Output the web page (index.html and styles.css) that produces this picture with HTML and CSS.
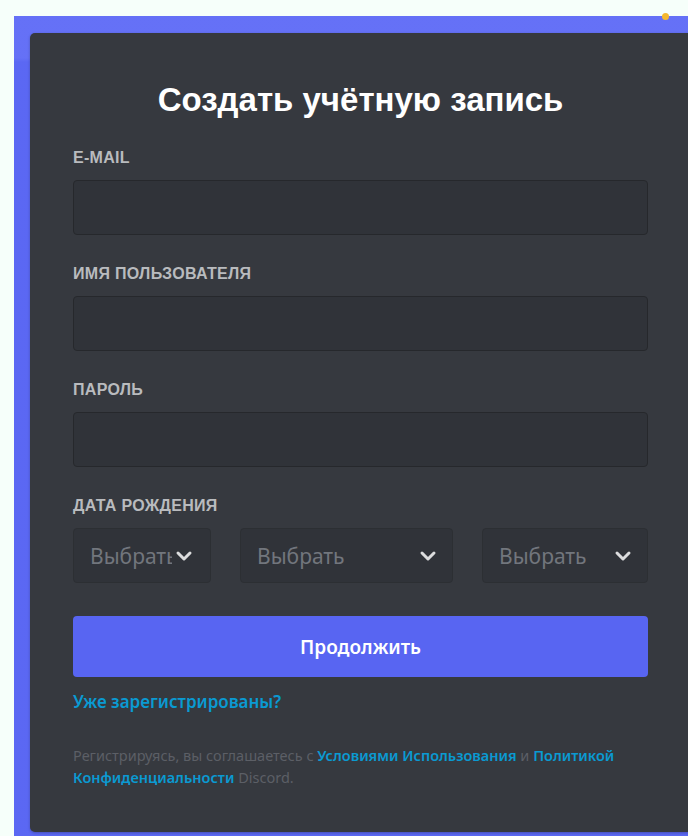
FILE: index.html
```html
<!DOCTYPE html>
<html lang="ru">
<head>
<meta charset="utf-8">
<title>Создать учётную запись</title>
<link rel="stylesheet" href="styles.css">
</head>
<body>
<div class="backdrop">
  <span class="spark"></span>
  <form class="card" onsubmit="return false">
    <h1 class="title">Создать учётную запись</h1>

    <div class="field">
      <label class="label" for="email">E-MAIL</label>
      <input class="input" id="email" type="email">
    </div>

    <div class="field">
      <label class="label" for="username">ИМЯ ПОЛЬЗОВАТЕЛЯ</label>
      <input class="input" id="username" type="text">
    </div>

    <div class="field">
      <label class="label" for="password">ПАРОЛЬ</label>
      <input class="input" id="password" type="password">
    </div>

    <div class="field field-last">
      <span class="label">ДАТА РОЖДЕНИЯ</span>
      <div class="dob">
        <div class="select select-day">
          <span class="select-text">Выбрать</span>
          <svg class="chevron" viewBox="0 0 24 24"><path d="M6 9l6 6 6-6"/></svg>
        </div>
        <div class="select select-month">
          <span class="select-text">Выбрать</span>
          <svg class="chevron" viewBox="0 0 24 24"><path d="M6 9l6 6 6-6"/></svg>
        </div>
        <div class="select select-year">
          <span class="select-text">Выбрать</span>
          <svg class="chevron" viewBox="0 0 24 24"><path d="M6 9l6 6 6-6"/></svg>
        </div>
      </div>
    </div>

    <button class="submit" type="submit">Продолжить</button>

    <a class="login-link" href="#">Уже зарегистрированы?</a>

    <p class="terms">Регистрируясь, вы соглашаетесь с <a href="#">Условиями Использования</a> и <a href="#">Политикой Конфиденциальности</a> Discord.</p>
  </form>
</div>
</body>
</html>
```

FILE: styles.css
```css
html, body {
  margin: 0;
  padding: 0;
  height: 100%;
  overflow: hidden;
}

body {
  background: #f6fffa;
}

.backdrop {
  position: relative;
  margin: 16px 0 0 14px;
  padding: 17px 0 40px 16px;
  background:
    linear-gradient(180deg, rgba(125, 135, 255, 0.35) 0, rgba(125, 135, 255, 0.35) 42px, rgba(125, 135, 255, 0.08) 46px),
    #5865f2;
}

.spark {
  position: absolute;
  top: -3px;
  left: 648px;
  width: 7px;
  height: 7px;
  border-radius: 50%;
  background: #f5b82e;
}

.card {
  box-sizing: border-box;
  width: 661px;
  padding: 47px 43px 44px;
  background: #36393f;
  border-radius: 5px 0 0 5px;
  box-shadow: 0 1px 3px rgba(0, 0, 0, 0.25);
  font-family: "Liberation Sans", Arial, sans-serif;
}

.title {
  margin: 0 0 29px;
  font-size: 33px;
  line-height: 40px;
  font-weight: 700;
  color: #ffffff;
  text-align: center;
}

.field {
  margin-bottom: 30px;
}

.field-last {
  margin-bottom: 33px;
}

.label {
  display: block;
  margin-bottom: 13px;
  font-size: 16px;
  line-height: 18px;
  font-weight: 700;
  color: #b9bbbe;
  letter-spacing: 0.3px;
}

.input {
  display: block;
  box-sizing: border-box;
  width: 100%;
  height: 55px;
  margin: 0;
  padding: 0 14px;
  background: #303339;
  border: 1px solid #26282c;
  border-radius: 4px;
  outline: none;
  color: #dcddde;
  font-size: 20px;
}

.dob {
  display: flex;
  gap: 29px;
}

.select {
  box-sizing: border-box;
  display: flex;
  align-items: center;
  height: 55px;
  padding: 0 12px 0 16px;
  background: #303339;
  border: 1px solid #2c2f33;
  border-radius: 4px;
  overflow: hidden;
}

.select-day { width: 138px; padding-right: 14px; }
.select-month { width: 213px; }
.select-year { width: 166px; }

.select-text {
  flex: 1;
  min-width: 0;
  overflow: hidden;
  white-space: nowrap;
  font-family: "Noto Sans", "Open Sans", sans-serif;
  font-size: 21px;
  color: #72767d;
}

.chevron {
  flex: none;
  width: 24px;
  height: 24px;
  fill: none;
  stroke: #dcddde;
  stroke-width: 3;
  stroke-linecap: round;
  stroke-linejoin: round;
}

.submit {
  display: block;
  width: 100%;
  height: 61px;
  margin: 0 0 14px;
  background: #5865f2;
  border: 0;
  border-radius: 4px;
  color: #ffffff;
  font-family: "Noto Sans", "Open Sans", sans-serif;
  font-size: 19px;
  font-weight: 600;
  cursor: pointer;
}

.login-link {
  display: inline-block;
  font-family: "Noto Sans", "Open Sans", sans-serif;
  font-size: 17px;
  font-weight: 600;
  line-height: 22px;
  color: #0a9ad2;
  text-decoration: none;
}

.terms {
  margin: 31px 0 0;
  font-family: "Noto Sans", "Open Sans", sans-serif;
  font-size: 14.5px;
  line-height: 22px;
  color: #5c5f66;
}

.terms a {
  color: #0a9ad2;
  font-weight: 600;
  text-decoration: none;
}
```
